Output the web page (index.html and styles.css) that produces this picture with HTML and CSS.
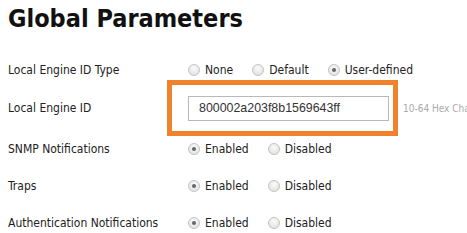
FILE: index.html
```html
<!DOCTYPE html>
<html lang="en">
<head>
  <meta charset="UTF-8">
  <title>Global Parameters</title>
  <link rel="stylesheet" href="styles.css">
</head>
<body>
  <div class="page">
    <h1>Global Parameters</h1>
    <div class="row">
      <div class="label">Local Engine ID Type</div>
      <div class="options">
        <span class="opt"><span class="radio"></span>None</span>
        <span class="opt"><span class="radio"></span>Default</span>
        <span class="opt"><span class="radio on"></span>User-defined</span>
      </div>
    </div>
    <div class="row row-id">
      <div class="label">Local Engine ID</div>
      <div class="highlight">
        <div class="field">800002a203f8b1569643ff</div>
      </div>
      <div class="hint">10-64 Hex Characters</div>
    </div>
    <div class="row">
      <div class="label">SNMP Notifications</div>
      <div class="options">
        <span class="opt"><span class="radio on"></span>Enabled</span>
        <span class="opt"><span class="radio"></span>Disabled</span>
      </div>
    </div>
    <div class="row">
      <div class="label">Traps</div>
      <div class="options">
        <span class="opt"><span class="radio on"></span>Enabled</span>
        <span class="opt"><span class="radio"></span>Disabled</span>
      </div>
    </div>
    <div class="row">
      <div class="label">Authentication Notifications</div>
      <div class="options">
        <span class="opt"><span class="radio on"></span>Enabled</span>
        <span class="opt"><span class="radio"></span>Disabled</span>
      </div>
    </div>
  </div>
</body>
</html>
```

FILE: styles.css
```css
body {
  margin: 0;
  padding: 0;
  background: #fff;
  font-family: "DejaVu Sans Condensed", "DejaVu Sans", sans-serif;
  color: #222;
  overflow: hidden;
}
.page {
  width: 467px;
  height: 233px;
  padding: 0 0 0 8px;
  box-sizing: border-box;
  white-space: nowrap;
  overflow: hidden;
}
h1 {
  margin: 0;
  padding: 4px 0 0 0;
  font-size: 25px;
  font-weight: bold;
  color: #111;
  height: 47px;
}
.row {
  display: flex;
  align-items: center;
  height: 37px;
  font-size: 12px;
}
.label {
  width: 180px;
  flex: none;
}
.options {
  display: flex;
  align-items: center;
}
.opt {
  display: inline-flex;
  align-items: center;
  margin-right: 19px;
}
.radio {
  width: 12px;
  height: 12px;
  border-radius: 50%;
  border: 1px solid #c4c4c4;
  background: radial-gradient(circle at 50% 35%, #fbfbfb, #dcdcdc);
  margin-right: 5px;
  box-sizing: border-box;
  position: relative;
}
.radio.on::after {
  content: "";
  position: absolute;
  left: 3px;
  top: 3px;
  width: 4px;
  height: 4px;
  border-radius: 50%;
  background: #666;
}
.row-id {
  height: 56px;
  margin-top: -8px;
  margin-bottom: -6px;
}
.label + .highlight {
  margin-left: -21px;
}
.highlight {
  flex: none;
  width: 231px;
  height: 56px;
  border: 5px solid #f0822c;
  box-sizing: border-box;
  display: flex;
  align-items: center;
  padding-left: 16px;
}
.field {
  width: 201px;
  height: 25px;
  border: 1px solid #b9b9b9;
  box-sizing: border-box;
  font-family: "Liberation Sans", Arial, sans-serif;
  font-size: 12.4px;
  color: #333;
  padding-left: 10px;
  line-height: 23px;
}
.hint {
  margin-left: 5px;
  font-size: 10px;
  color: #aaa;
}
```
